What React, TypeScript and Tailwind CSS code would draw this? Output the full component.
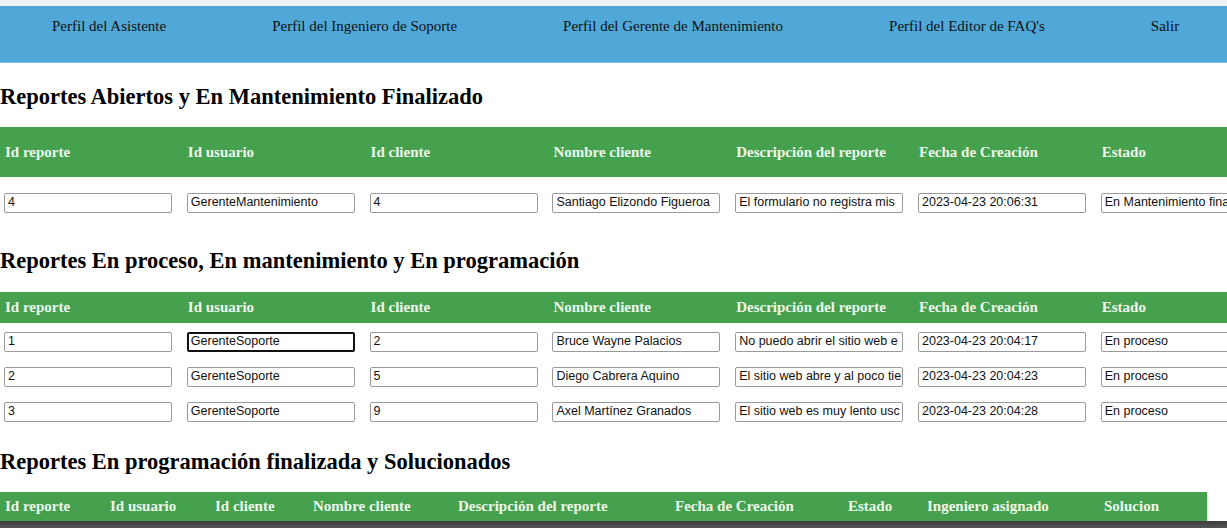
import React from "react";

const serif = { fontFamily: '"Liberation Serif", "Times New Roman", serif' };

const cols1 = ["Id reporte", "Id usuario", "Id cliente", "Nombre cliente", "Descripción del reporte", "Fecha de Creación", "Estado"];

const rows1 = [["4", "GerenteMantenimiento", "4", "Santiago Elizondo Figueroa", "El formulario no registra mis", "2023-04-23 20:06:31", "En Mantenimiento finalizado"]];

const rows2 = [
  ["1", "GerenteSoporte", "2", "Bruce Wayne Palacios", "No puedo abrir el sitio web e", "2023-04-23 20:04:17", "En proceso"],
  ["2", "GerenteSoporte", "5", "Diego Cabrera Aquino", "El sitio web abre y al poco tie", "2023-04-23 20:04:23", "En proceso"],
  ["3", "GerenteSoporte", "9", "Axel Martínez Granados", "El sitio web es muy lento usc", "2023-04-23 20:04:28", "En proceso"],
];

const cols3: [string, string][] = [
  ["Id reporte", "w-[105px]"],
  ["Id usuario", "w-[105px]"],
  ["Id cliente", "w-[98px]"],
  ["Nombre cliente", "w-[145px]"],
  ["Descripción del reporte", "w-[217px]"],
  ["Fecha de Creación", "w-[173px]"],
  ["Estado", "w-[79px]"],
  ["Ingeniero asignado", "w-[177px]"],
  ["Solucion", "w-[108px]"],
];

function Field({ value, focused }: { value: string; focused?: boolean }) {
  return (
    <div
      className={
        "w-[168px] h-[20px] bg-white rounded-[2px] overflow-hidden whitespace-nowrap flex items-center text-[12.5px] text-[#111] " +
        (focused ? "border-2 border-[#111] pl-[2px]" : "border border-[#9a9a9a] pl-[3px]")
      }
      style={{ fontFamily: '"Liberation Sans", Arial, sans-serif' }}
    >
      {value}
    </div>
  );
}

function HeaderRow({ h }: { h: string }) {
  return (
    <div className={"flex bg-[#46a14e] " + h}>
      {cols1.map((c) => (
        <div key={c} className="w-[182.8px] shrink-0 pl-[5px] flex items-center text-[15px] font-bold text-[#eef7ea] whitespace-nowrap" style={serif}>
          {c}
        </div>
      ))}
    </div>
  );
}

function DataRow({ r, focusIdx }: { r: string[]; focusIdx?: number }) {
  return (
    <div className="flex h-[35px] items-center">
      {r.map((v, i) => (
        <div key={i} className="w-[182.8px] shrink-0 pl-[4px]">
          <Field value={v} focused={focusIdx === i} />
        </div>
      ))}
    </div>
  );
}

function Heading({ children }: { children: React.ReactNode }) {
  return (
    <h2 className="text-[22.5px] font-bold text-black leading-[26px] whitespace-nowrap" style={serif}>
      {children}
    </h2>
  );
}

export default function App() {
  const nav = ["Perfil del Asistente", "Perfil del Ingeniero de Soporte", "Perfil del Gerente de Mantenimiento", "Perfil del Editor de FAQ's", "Salir"];
  return (
    <div className="w-[1227px] h-[528px] overflow-hidden bg-white relative">
      <div className="h-[6px] bg-[#eef0f1]" />
      <nav className="h-[57px] bg-[#4fa8d8] flex pl-[52px] gap-[106px] pt-[12px] border-b border-[#7dbde2]">
        {nav.map((n) => (
          <span key={n} className="text-[15px] text-[#111] leading-[17px] whitespace-nowrap" style={serif}>
            {n}
          </span>
        ))}
      </nav>
      <div className="pt-[21px] pb-[17px]">
        <Heading>Reportes Abiertos y En Mantenimiento Finalizado</Heading>
      </div>
      <div className="w-[1300px]">
        <HeaderRow h="h-[50px]" />
        <div className="pt-[8px]">
          <DataRow r={rows1[0]} />
        </div>
      </div>
      <div className="pt-[28px] pb-[18px]">
        <Heading>Reportes En proceso, En mantenimiento y En programación</Heading>
      </div>
      <div className="w-[1300px]">
        <HeaderRow h="h-[31px]" />
        <div className="pt-[1px]">
          <DataRow r={rows2[0]} focusIdx={1} />
          <DataRow r={rows2[1]} />
          <DataRow r={rows2[2]} />
        </div>
      </div>
      <div className="pt-[20px] pb-[17px]">
        <Heading>Reportes En programación finalizada y Solucionados</Heading>
      </div>
      <div className="w-[1207px] h-[29px] bg-[#46a14e] flex shadow-[0_2px_2px_rgba(0,0,0,0.35)]">
        {cols3.map(([c, w]) => (
          <div key={c} className={w + " shrink-0 pl-[5px] flex items-center text-[15px] font-bold text-[#eef7ea] whitespace-nowrap"} style={serif}>
            {c}
          </div>
        ))}
      </div>
      <div className="absolute left-0 right-0 bottom-0 h-[7px] bg-gradient-to-b from-[#3d3d3d] to-[#555555]" />
    </div>
  );
}
